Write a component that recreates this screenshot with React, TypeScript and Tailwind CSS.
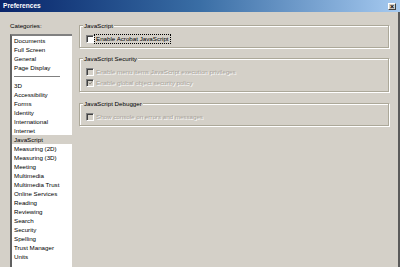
import { Fragment } from "react";

const categories: string[] = [
  "Documents",
  "Full Screen",
  "General",
  "Page Display",
  "-",
  "3D",
  "Accessibility",
  "Forms",
  "Identity",
  "International",
  "Internet",
  "JavaScript",
  "Measuring (2D)",
  "Measuring (3D)",
  "Meeting",
  "Multimedia",
  "Multimedia Trust",
  "Online Services",
  "Reading",
  "Reviewing",
  "Search",
  "Security",
  "Spelling",
  "Trust Manager",
  "Units",
];

function CheckBox({ checked, disabled }: { checked?: boolean; disabled?: boolean }) {
  return (
    <span
      className={`relative flex h-[8px] w-[8px] shrink-0 items-center justify-center border border-t-[#808080] border-l-[#808080] border-r-white border-b-white shadow-[inset_1px_1px_0_#404040] ${
        disabled ? "bg-[#d4d0c8]" : "bg-white"
      }`}
    >
      {checked && (
        <svg width="6" height="6" viewBox="0 0 7 7" className="mt-[1px] ml-[1px]">
          <path d="M1 3 L3 5 L6 1" fill="none" stroke="#8c8880" strokeWidth="1.3" />
        </svg>
      )}
    </span>
  );
}

function GroupBox({ title, className, children }: { title: string; className?: string; children: React.ReactNode }) {
  return (
    <div
      className={`relative flex flex-col gap-[2px] border border-[#aca899] pt-[8px] pb-[4px] pl-[6px] shadow-[inset_1px_1px_0_#fff,1px_1px_0_#fff] ${className ?? ""}`}
    >
      <span className="absolute -top-[5px] left-[3px] bg-[#d4d0c8] px-[1px] leading-[9px] text-black">{title}</span>
      {children}
    </div>
  );
}

function Option({ label, checked, disabled, focused }: { label: string; checked?: boolean; disabled?: boolean; focused?: boolean }) {
  return (
    <div className="flex h-[9px] items-center gap-[1px]">
      <CheckBox checked={checked} disabled={disabled} />
      <span
        className={`px-[1px] leading-[8px] ${
          disabled ? "text-[#a7a39b] [text-shadow:1px_1px_0_#fff]" : "text-black"
        } ${focused ? "outline outline-1 outline-dotted outline-black" : ""}`}
      >
        {label}
      </span>
    </div>
  );
}

export default function App() {
  return (
    <div
      className="flex h-screen w-full flex-col overflow-hidden bg-[#d4d0c8] text-[6.2px]"
      style={{ fontFamily: '"Liberation Sans", Arial, sans-serif' }}
    >
      <div className="flex h-[12px] shrink-0 items-center justify-between bg-gradient-to-r from-[#0a246a] via-[#3a6ea5] to-[#a6caf0] pl-[3px] pr-[4px]">
        <span className="text-[6.6px] font-bold leading-none text-white">Preferences</span>
        <span className="flex h-[7px] w-[8px] items-center justify-center border border-t-white border-l-white border-r-[#404040] border-b-[#404040] bg-[#d4d0c8] text-[7px] font-bold leading-none text-black">
          ×
        </span>
      </div>
      <div className="flex min-h-0 flex-1 border-r-2 border-[#5a5a5a]">
        <div className="flex w-[72px] shrink-0 flex-col pt-[9px] pl-[10px]">
          <span className="h-[13px] leading-[9px] text-black">Categories:</span>
          <div className="flex flex-1 flex-col border-t-2 border-l-2 border-t-[#808080] border-l-[#606060] bg-white">
            {categories.map((c) => (
              <Fragment key={c}>
                {c === "-" ? (
                  <div className="flex h-[9px] items-center pl-[2px]">
                    <div className="h-0 w-[46px] border-t border-[#808080]" />
                  </div>
                ) : (
                  <div
                    className={`h-[9px] pl-[2px] leading-[9px] text-black ${
                      c === "JavaScript" ? "bg-[#d4d0c8]" : ""
                    }`}
                  >
                    {c}
                  </div>
                )}
              </Fragment>
            ))}
          </div>
        </div>
        <div className="flex flex-1 flex-col pt-[13px] pr-[9px] pl-[7px]">
          <GroupBox title="JavaScript">
            <Option label="Enable Acrobat JavaScript" focused />
          </GroupBox>
          <GroupBox title="JavaScript Security" className="mt-[10px]">
            <Option label="Enable menu items JavaScript execution privileges" disabled />
            <Option label="Enable global object security policy" disabled checked />
          </GroupBox>
          <GroupBox title="JavaScript Debugger" className="mt-[11px]">
            <Option label="Show console on errors and messages" disabled />
          </GroupBox>
        </div>
      </div>
    </div>
  );
}
